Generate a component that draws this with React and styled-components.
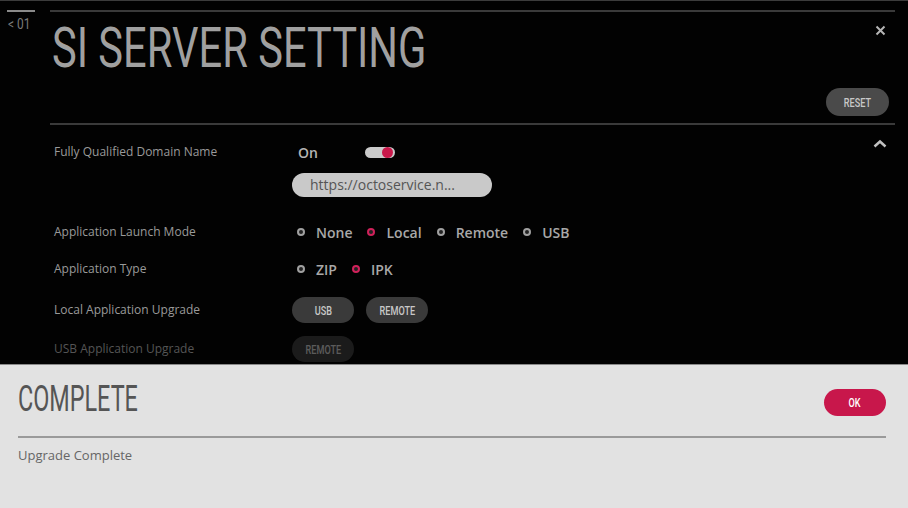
import React from 'react';
import styled, { createGlobalStyle } from 'styled-components';

const GlobalStyle = createGlobalStyle`
  html, body {
    margin: 0;
    padding: 0;
    background: #000;
  }
  #root {
    width: 908px;
    height: 508px;
  }
`;

const Screen = styled.div`
  position: relative;
  width: 908px;
  height: 508px;
  overflow: hidden;
  background: #020202;
  border-top: 1px solid #3c3c3c;
  box-sizing: border-box;
  display: flex;
  font-family: 'Open Sans', 'Liberation Sans', sans-serif;
`;

const Condensed = styled.span`
  display: inline-block;
  font-family: Roboto, 'Liberation Sans', sans-serif;
  white-space: nowrap;
  transform: scaleX(${(p) => p.$scale || 0.72});
  transform-origin: ${(p) => p.$origin || 'left center'};
`;

const SideNav = styled.div`
  width: 50px;
  padding: 9px 0 0 7px;
  box-sizing: border-box;
`;

const NavBar = styled.div`
  width: 28px;
  height: 2px;
  background: #8a8a8a;
`;

const NavLabel = styled(Condensed)`
  margin: 1px 0 0 1px;
  font-size: 14px;
  line-height: 16px;
  color: #7a7a7a;
`;

const Main = styled.div`
  flex: 1;
  margin-right: 13px;
  padding-top: 9px;
`;

const Rule = styled.div`
  height: 2px;
  background: #3a3a3a;
`;

const Header = styled.div`
  height: 111px;
  box-sizing: border-box;
  display: grid;
  grid-template-columns: 1fr auto;
  grid-template-rows: 1fr auto;
  padding: 0 6px 7px 2px;
`;

const Title = styled(Condensed)`
  font-size: 55px;
  font-weight: 400;
  color: #a0a0a0;
  line-height: 1;
  margin-top: 9px;
`;

const CloseBtn = styled.div`
  margin: 7px 3px 0 0;
  justify-self: end;
`;

const PillButton = styled.div`
  display: flex;
  align-items: center;
  justify-content: center;
  height: ${(p) => p.$h || 26}px;
  width: ${(p) => p.$w || 62}px;
  border-radius: 14px;
  background: ${(p) => p.$bg || '#3a3a3a'};
  color: ${(p) => p.$color || '#c8c8c8'};
  font-size: 13px;
  font-weight: 500;
  opacity: ${(p) => (p.$dim ? 0.45 : 1)};
`;

const ResetWrap = styled.div`
  grid-column: 2;
  grid-row: 2;
`;

const Settings = styled.div`
  padding: 17px 0 0 4px;
`;

const Row = styled.div`
  display: grid;
  grid-template-columns: 238px 1fr 30px;
  align-items: start;
  margin-top: ${(p) => p.$top || 0}px;
`;

const Label = styled.div`
  font-size: 12px;
  line-height: ${(p) => p.$lh || 20}px;
  color: ${(p) => (p.$dim ? '#555' : '#9a9a9a')};
`;

const Values = styled.div`
  display: flex;
  flex-direction: column;
  align-items: flex-start;
`;

const Line = styled.div`
  display: flex;
  align-items: center;
  height: 20px;
`;

const ValueText = styled.span`
  margin-left: 6px;
  font-size: 14px;
  color: #b4b4b4;
  font-weight: 600;
`;

const Toggle = styled.div`
  width: 30px;
  height: 11px;
  border-radius: 6px;
  background: #cacaca;
  margin-left: 47px;
  position: relative;
  &::after {
    content: '';
    position: absolute;
    right: 2px;
    top: 0px;
    width: 11px;
    height: 11px;
    border-radius: 50%;
    background: #c8184a;
  }
`;

const UrlField = styled.div`
  margin: 11px 0 0 0;
  width: 200px;
  height: 24px;
  border-radius: 12px;
  background: #c9c9c9;
  color: #555;
  font-size: 14px;
  line-height: 24px;
  padding-left: 18px;
  box-sizing: border-box;
`;

const Radio = styled.span`
  display: inline-flex;
  align-items: center;
  gap: 11px;
  margin-left: 5px;
  margin-right: 10px;
  font-size: 14px;
  font-weight: 600;
  color: #a8a8a8;
  &::before {
    content: '';
    width: 4px;
    height: 4px;
    border-radius: 50%;
    border: 2px solid ${(p) => (p.$on ? '#d0215a' : '#a0a0a0')};
    background: #222;
  }
`;

const Chevron = styled.div`
  justify-self: end;
  margin: -11px 8px 0 0;
`;

const ButtonRow = styled.div`
  display: flex;
  gap: 12px;
`;

const Overlay = styled.div`
  position: absolute;
  left: 0;
  right: 0;
  top: 363px;
  bottom: 0;
  background: #e2e2e2;
  border-top: 1px solid #8a8a8a;
  padding: 0 22px 0 18px;
`;

const OverlayHead = styled.div`
  height: 71px;
  display: flex;
  justify-content: space-between;
  align-items: flex-start;
  border-bottom: 2px solid #9a9a9a;
`;

const OverlayTitle = styled(Condensed)`
  margin-top: 13px;
  font-size: 36px;
  color: #555;
  line-height: 1.2;
`;

const OkWrap = styled.div`
  margin-top: 24px;
`;

const Message = styled.div`
  margin-top: 8px;
  font-size: 13px;
  color: #666;
`;

const X = () => (
  <svg width="11" height="11" viewBox="0 0 11 11">
    <path d="M1.5 1.5 L9.5 9.5 M9.5 1.5 L1.5 9.5" stroke="#b5b5b5" strokeWidth="2" />
  </svg>
);

const Up = () => (
  <svg width="14" height="9" viewBox="0 0 14 9">
    <path d="M1.5 7.5 L7 2.5 L12.5 7.5" stroke="#c0c0c0" strokeWidth="2.5" fill="none" />
  </svg>
);

const BtnText = ({ children }) => (
  <Condensed $scale={0.7} $origin="center">{children}</Condensed>
);

export default function App() {
  return (
    <>
      <GlobalStyle />
      <Screen>
        <SideNav>
          <NavBar />
          <NavLabel $scale={0.85}>&lt; 01</NavLabel>
        </SideNav>
        <Main>
          <Rule />
          <Header>
            <Title $scale={0.757}>SI SERVER SETTING</Title>
            <CloseBtn><X /></CloseBtn>
            <ResetWrap>
              <PillButton $w={63} $h={28} $bg="#4a4a4a">
                <BtnText>RESET</BtnText>
              </PillButton>
            </ResetWrap>
          </Header>
          <Rule />
          <Settings>
            <Row>
              <Label>Fully Qualified Domain Name</Label>
              <Values>
                <Line>
                  <ValueText>On</ValueText>
                  <Toggle />
                </Line>
                <UrlField>https://octoservice.n...</UrlField>
              </Values>
              <Chevron><Up /></Chevron>
            </Row>
            <Row $top={25}>
              <Label>Application Launch Mode</Label>
              <Line>
                <Radio>None</Radio>
                <Radio $on>Local</Radio>
                <Radio>Remote</Radio>
                <Radio>USB</Radio>
              </Line>
            </Row>
            <Row $top={17}>
              <Label>Application Type</Label>
              <Line>
                <Radio>ZIP</Radio>
                <Radio $on>IPK</Radio>
              </Line>
            </Row>
            <Row $top={18}>
              <Label $lh={26}>Local Application Upgrade</Label>
              <ButtonRow>
                <PillButton><BtnText>USB</BtnText></PillButton>
                <PillButton><BtnText>REMOTE</BtnText></PillButton>
              </ButtonRow>
            </Row>
            <Row $top={13}>
              <Label $lh={26} $dim>USB Application Upgrade</Label>
              <ButtonRow>
                <PillButton $dim><BtnText>REMOTE</BtnText></PillButton>
              </ButtonRow>
            </Row>
          </Settings>
        </Main>
        <Overlay>
          <OverlayHead>
            <OverlayTitle $scale={0.65}>COMPLETE</OverlayTitle>
            <OkWrap>
              <PillButton $bg="#c8174b" $color="#fff" $h={27}>
                <BtnText>OK</BtnText>
              </PillButton>
            </OkWrap>
          </OverlayHead>
          <Message>Upgrade Complete</Message>
        </Overlay>
      </Screen>
    </>
  );
}
